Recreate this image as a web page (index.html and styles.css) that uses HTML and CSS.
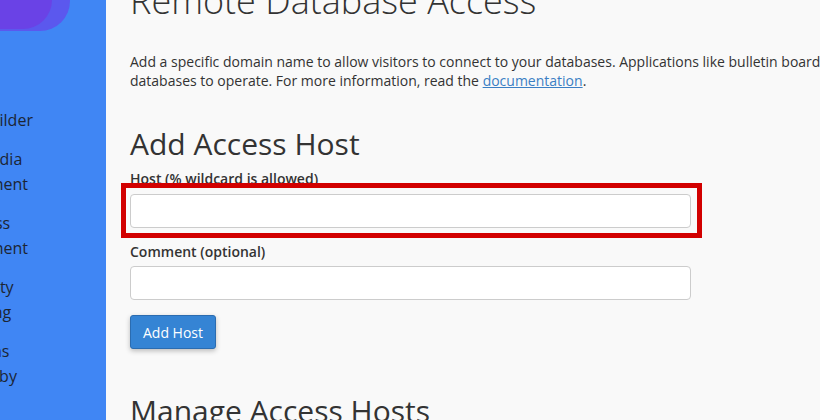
FILE: index.html
```html
<!DOCTYPE html>
<html lang="en">
<head>
    <meta charset="UTF-8">
    <meta name="viewport" content="width=device-width, initial-scale=1.0">
    <title>Remote Database Access</title>
    <link rel="stylesheet" href="styles.css">
</head>
<body>
    <div class="layout">
        <aside class="sidebar">
            <div class="brand">
                <div class="brand-inner"></div>
            </div>
            <ul class="nav">
                <li>Sitejet Builder</li>
                <li>Social Media<br>Management</li>
                <li>WordPress<br>Management</li>
                <li>Site Quality<br>Monitoring</li>
                <li>Extensions<br>Powered by</li>
            </ul>
        </aside>

        <main class="content">
            <h1 class="page-title">Remote Database Access</h1>
            <p class="intro">Add a specific domain name to allow visitors to connect to your databases. Applications like bulletin boards, shopping carts, and guestbooks require remote databases to operate. For more information, read the <a href="#">documentation</a>.</p>

            <h2>Add Access Host</h2>
            <form class="host-form">
                <div class="form-group">
                    <label for="host">Host (% wildcard is allowed)</label>
                    <div class="highlight">
                        <input type="text" id="host" class="form-control">
                    </div>
                </div>
                <div class="form-group">
                    <label for="comment">Comment (optional)</label>
                    <input type="text" id="comment" class="form-control">
                </div>
                <button type="button" class="btn-primary">Add Host</button>
            </form>

            <h2 class="section-title">Manage Access Hosts</h2>
        </main>
    </div>
</body>
</html>
```

FILE: styles.css
```css
body {
    margin: 0;
    font-family: "Open Sans", "Liberation Sans", sans-serif;
    background: #f9f9f9;
    color: #333;
    overflow: hidden;
}

.layout {
    display: flex;
    height: 420px;
}

/* left navigation, scrolled so only the tail of each label shows */
.sidebar {
    position: relative;
    flex: 0 0 106px;
    background: #4086f4;
    overflow: hidden;
}

.brand {
    position: absolute;
    top: 0;
    left: 0;
    width: 70px;
    height: 31px;
    background: #5b58ee;
    border-bottom-right-radius: 30px;
}

.brand-inner {
    width: 52px;
    height: 29px;
    background: #6a42e6;
    border-bottom-right-radius: 30px;
}

.nav {
    list-style: none;
    margin: 108px 0 0 -71px;
    padding: 0;
    width: 180px;
    font-size: 16px;
    line-height: 25px;
    color: #1c2533;
    white-space: nowrap;
}

.nav li {
    margin-bottom: 14px;
}

.content {
    flex: 0 0 1030px;
    padding-left: 24px;
}

.page-title {
    margin: -19px 0 0;
    font-size: 36px;
    font-weight: 300;
    line-height: 40px;
}

.intro {
    margin: 31px 0 0;
    font-size: 14px;
    line-height: 19px;
}

.intro a {
    color: #3b7fc4;
}

h2 {
    margin: 37px 0 10px;
    font-size: 30px;
    font-weight: 400;
    line-height: 33px;
}

.host-form {
    width: 561px;
}

.form-group {
    margin-bottom: 15px;
}

label {
    display: block;
    margin-bottom: 5px;
    font-size: 14px;
    font-weight: 600;
    line-height: 18.6px;
}

.form-control {
    display: block;
    box-sizing: border-box;
    width: 100%;
    height: 34px;
    border: 1px solid #ccc;
    border-radius: 4px;
    background: #fff;
}

/* red callout drawn over the host field */
.highlight {
    position: relative;
}

.highlight::after {
    content: "";
    position: absolute;
    top: -11px;
    left: -9px;
    right: -11px;
    bottom: -10px;
    border: 5px solid #d20000;
    pointer-events: none;
}

.btn-primary {
    height: 34px;
    padding: 6px 12px;
    border: 1px solid #2b6cb0;
    border-radius: 3px;
    background: #3584d4;
    color: #fff;
    font-family: inherit;
    font-size: 14px;
    box-shadow: 0 2px 5px rgba(0, 0, 0, 0.25);
}

.section-title {
    margin-top: 45px;
}
```
